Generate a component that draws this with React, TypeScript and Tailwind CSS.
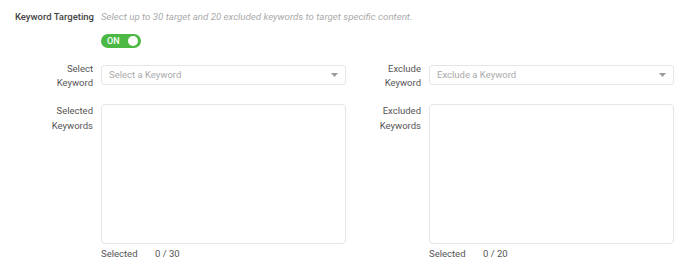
import React from "react";

const Caret = () => (
  <svg width="7" height="4" viewBox="0 0 7 4" className="shrink-0">
    <path d="M0 0 L7 0 L3.5 4 Z" fill="#999" />
  </svg>
);

type ColProps = {
  selectLabel: [string, string];
  placeholder: string;
  listLabel: [string, string];
  max: number;
  labelW: string;
};

const Column = ({ selectLabel, placeholder, listLabel, max, labelW }: ColProps) => {
  return (
    <div className="flex flex-col">
      <div className="flex items-start">
        <div className={`${labelW} text-right pr-2 text-[9.5px] leading-[14px] text-[#555] mt-[-1px]`}>
          <div>{selectLabel[0]}</div>
          <div>{selectLabel[1]}</div>
        </div>
        <div className="w-[245px] h-[20px] mt-[2px] border border-[#e6e6e6] rounded-[3px] flex items-center justify-between pl-[7px] pr-[7px]">
          <span className="text-[9.5px] text-[#aaa]">{placeholder}</span>
          <Caret />
        </div>
      </div>
      <div className="flex items-start mt-[14px]">
        <div className={`${labelW} text-right pr-2 text-[9.5px] leading-[15px] text-[#555] mt-[-1px]`}>
          <div>{listLabel[0]}</div>
          <div>{listLabel[1]}</div>
        </div>
        <div className="flex flex-col">
          <div className="w-[245px] h-[140px] border border-[#e6e6e6] rounded-[4px]" />
          <div className="flex text-[9.5px] text-[#555] mt-[3px] leading-[14px]">
            <span className="w-[54px]">Selected</span>
            <span>0 / {max}</span>
          </div>
        </div>
      </div>
    </div>
  );
};

export default function App() {
  return (
    <div className="w-[700px] h-[272px] bg-white overflow-hidden" style={{ fontFamily: "Roboto, sans-serif" }}>
      <div className="flex items-center pt-[10px]">
        <div className="w-[101px] text-right pr-[7px] text-[9.5px] font-medium text-[#444] leading-[14px]">
          Keyword Targeting
        </div>
        <div className="text-[9.7px] italic text-[#aaa] leading-[14px]">
          Select up to 30 target and 20 excluded keywords to target specific content.
        </div>
      </div>
      <div className="pl-[101px] mt-[10px]">
        <div className="w-[40px] h-[14px] rounded-full bg-[#4cb944] flex items-center justify-between pl-[6px] pr-[3px]">
          <span className="text-[9px] text-white font-medium leading-none">ON</span>
          <span className="w-[10px] h-[10px] rounded-full bg-white" />
        </div>
      </div>
      <div className="flex mt-[15px]">
        <Column
          selectLabel={["Select", "Keyword"]}
          placeholder="Select a Keyword"
          listLabel={["Selected", "Keywords"]}
          max={30}
          labelW="w-[101px]"
        />
        <Column
          selectLabel={["Exclude", "Keyword"]}
          placeholder="Exclude a Keyword"
          listLabel={["Excluded", "Keywords"]}
          max={20}
          labelW="w-[83px]"
        />
      </div>
    </div>
  );
}
